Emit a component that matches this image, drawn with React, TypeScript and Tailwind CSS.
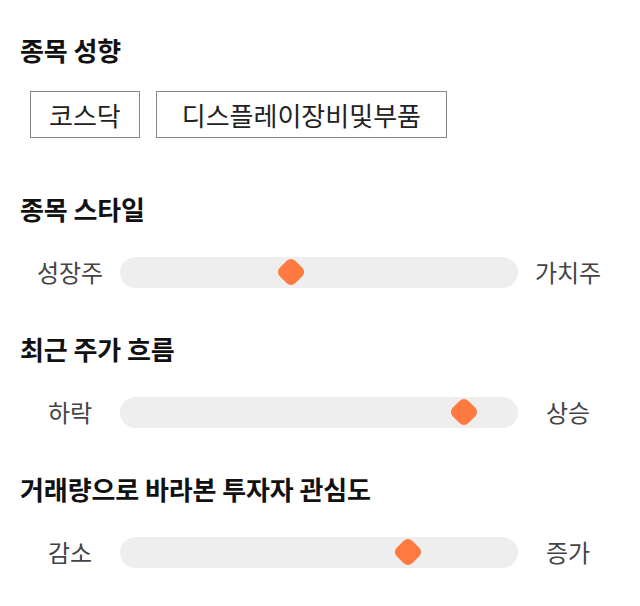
import React from "react";

const font = { fontFamily: '"Noto Sans CJK KR", "Noto Sans", sans-serif' };

function Heading({ children }: { children: React.ReactNode }) {
  return (
    <h2 className="text-[26px] leading-[32px] font-bold text-[#111] tracking-[-0.1px]">{children}</h2>
  );
}

function Slider({ left, right, value }: { left: string; right: string; value: number }) {
  return (
    <div className="flex items-center h-[30px]">
      <div className="w-[100px] text-center text-[24px] leading-[30px] text-[#444]">{left}</div>
      <div className="relative w-[398px] h-[31px] rounded-full bg-[#eeeeee]">
        <div
          className="absolute top-1/2 w-[22px] h-[22px] -translate-x-1/2 -translate-y-1/2 rotate-45 rounded-[6px] bg-[#ff7a40]"
          style={{ left: `${value}px` }}
        />
      </div>
      <div className="w-[100px] text-center text-[24px] leading-[30px] text-[#444]">{right}</div>
    </div>
  );
}

export default function App() {
  return (
    <div className="w-[640px] h-[606px] bg-white px-[20px] pt-[34px]" style={font}>
      <Heading>종목 성향</Heading>
      <div className="mt-[25px] flex gap-[16px] pl-[10px]">
        <div className="h-[47px] px-[18px] flex items-center border border-[#888] text-[26px] text-[#222]">코스닥</div>
        <div className="h-[47px] px-[25px] flex items-center border border-[#888] text-[26px] text-[#222]">디스플레이장비및부품</div>
      </div>
      <div className="mt-[55px]">
        <Heading>종목 스타일</Heading>
      </div>
      <div className="mt-[32px]">
        <Slider left="성장주" right="가치주" value={171} />
      </div>
      <div className="mt-[46px]">
        <Heading>최근 주가 흐름</Heading>
      </div>
      <div className="mt-[32px]">
        <Slider left="하락" right="상승" value={344} />
      </div>
      <div className="mt-[46px]">
        <Heading>거래량으로 바라본 투자자 관심도</Heading>
      </div>
      <div className="mt-[32px]">
        <Slider left="감소" right="증가" value={288} />
      </div>
    </div>
  );
}
